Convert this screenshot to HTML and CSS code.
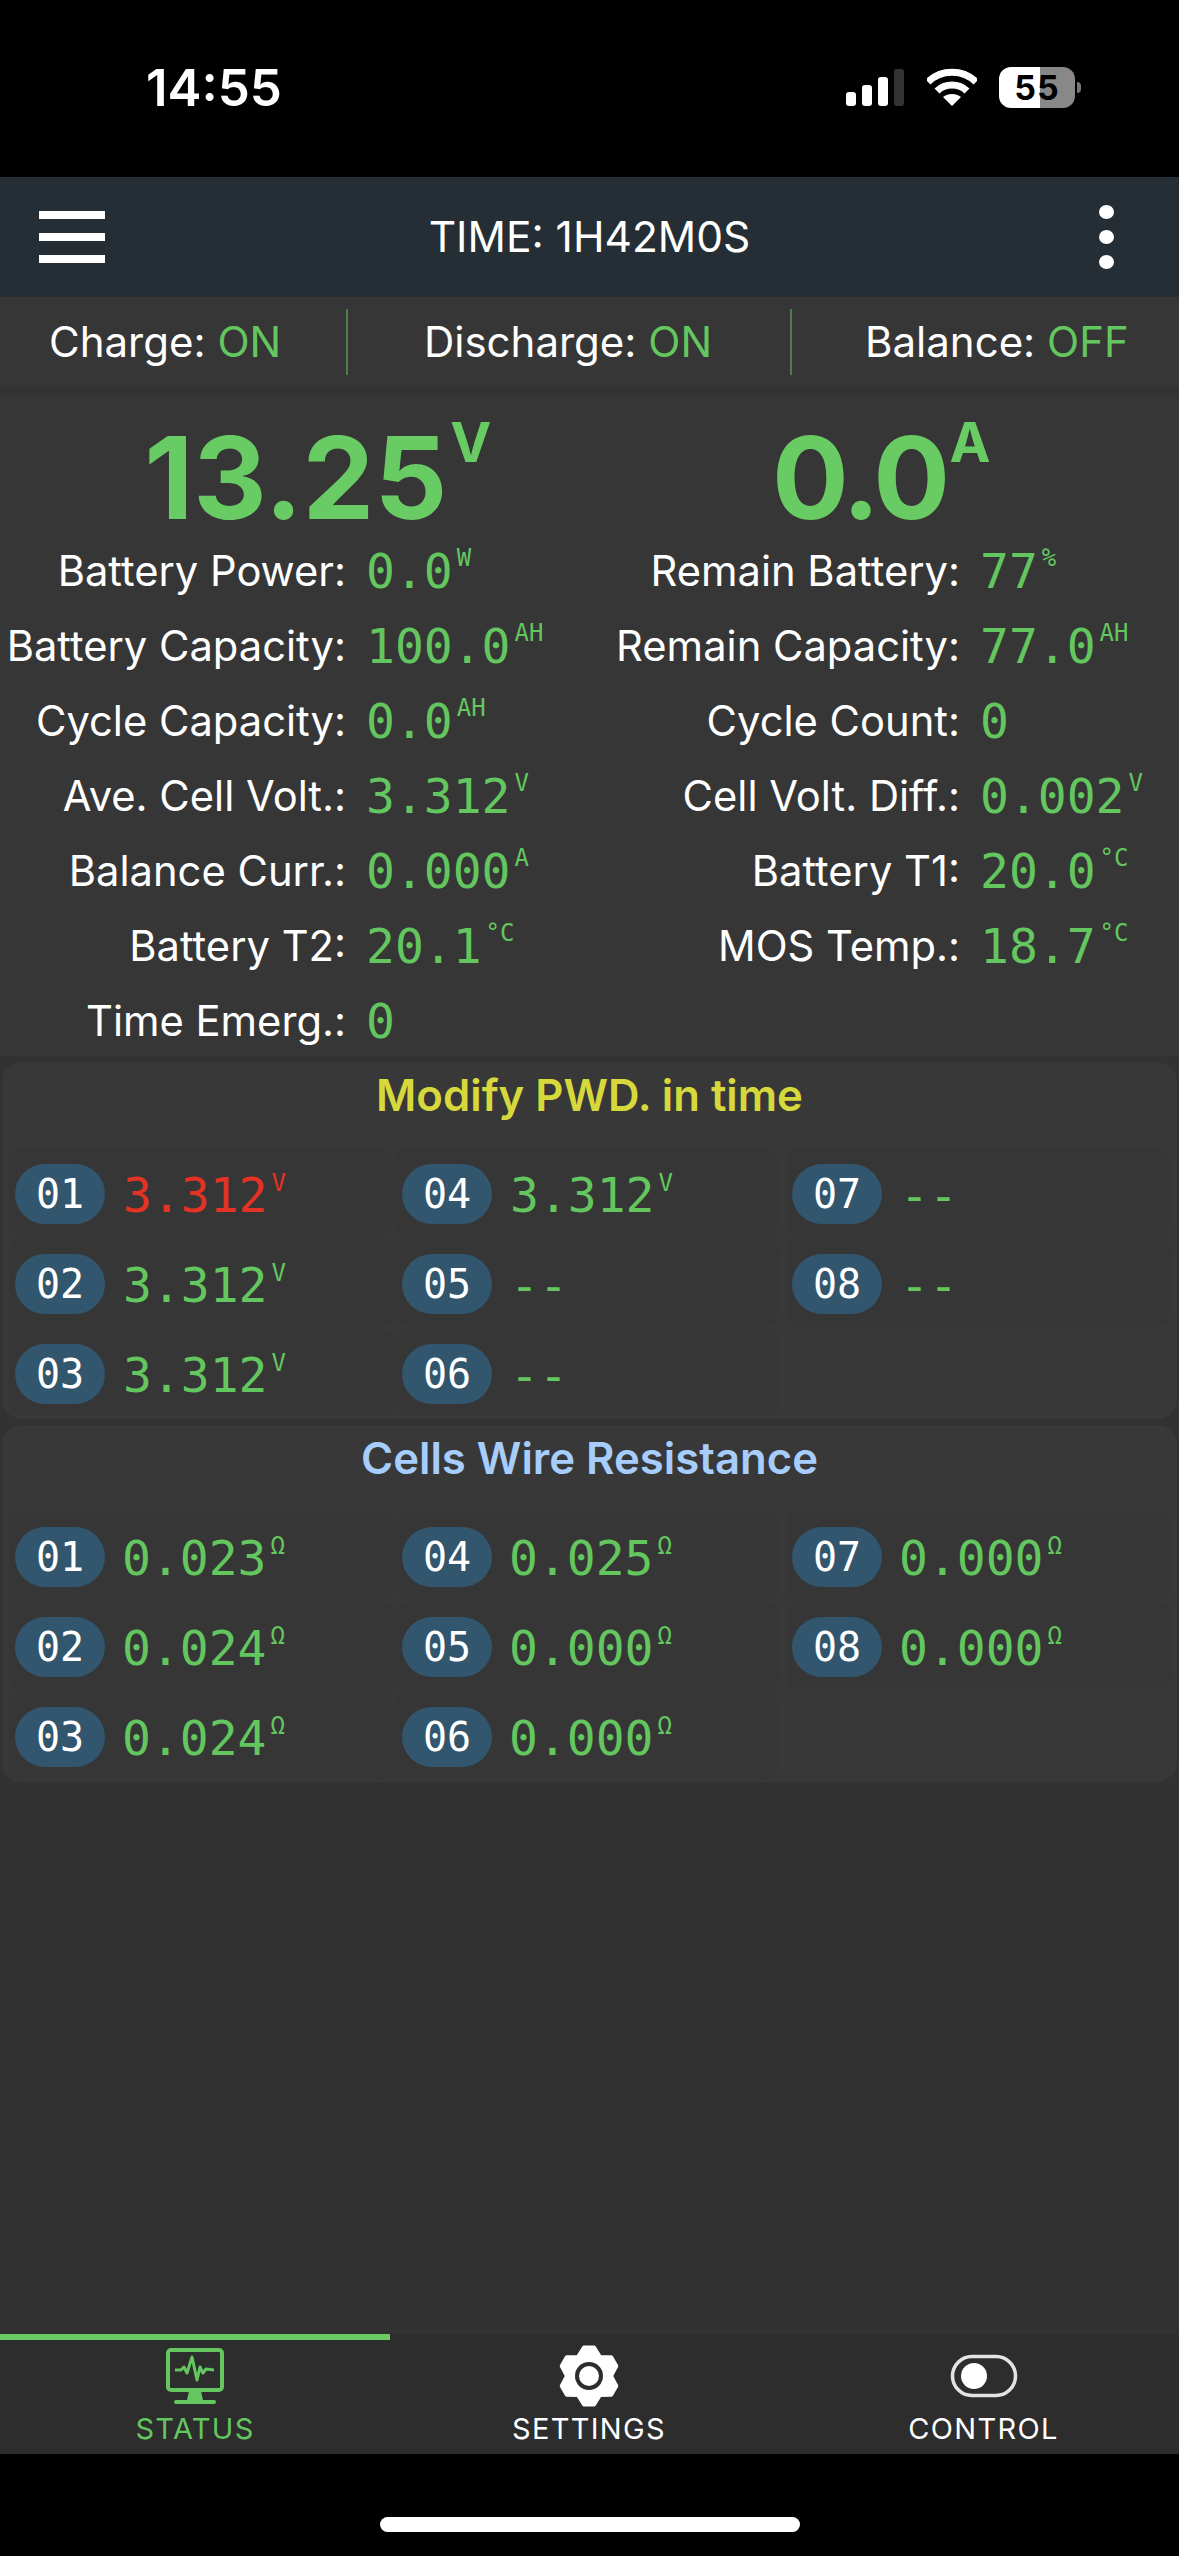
FILE: index.html
```html
<!DOCTYPE html>
<html lang="en">
<head>
<meta charset="utf-8">
<title>BMS Status</title>
<link rel="stylesheet" href="styles.css">
</head>
<body>
<div class="phone">
  <div class="statusbar">
    <span class="clock">14:55</span>
    <div class="sys">
      <svg class="signal" width="58" height="38" viewBox="0 0 58 38"><rect x="0" y="23" width="10" height="14" rx="3" fill="#fff"/><rect x="16" y="16" width="10" height="21" rx="3" fill="#fff"/><rect x="32" y="8" width="10" height="29" rx="3" fill="#fff"/><rect x="48" y="0" width="10" height="37" rx="3" fill="#333"/></svg>
      <svg class="wifi" width="50" height="38" viewBox="0 0 50 38"><path d="M1 14C14 1 36 1 49 14" fill="none" stroke="#fff" stroke-width="7"/><path d="M10 23C18 15 32 15 40 23" fill="none" stroke="#fff" stroke-width="7"/><path d="M25 38L16 29C21 25 29 25 34 29Z" fill="#fff"/></svg>
      <span class="battery">55</span>
    </div>
  </div>

  <header class="appbar">
    <div class="burger"><i></i><i></i><i></i></div>
    <div class="apptitle">TIME: 1H42M0S</div>
    <div class="dots"><i></i><i></i><i></i></div>
  </header>

  <div class="strip">
    <div class="sw sw1">Charge:&nbsp;<b>ON</b></div>
    <div class="sep"></div>
    <div class="sw sw2">Discharge:&nbsp;<b>ON</b></div>
    <div class="sep"></div>
    <div class="sw sw3">Balance:&nbsp;<b>OFF</b></div>
  </div>

  <main class="main">
    <section class="metrics">
      <div class="bigrow">
        <div class="big big1">13.25<sup>V</sup></div>
        <div class="big big2">0.0<sup>A</sup></div>
      </div>
      <div class="mgrid">
        <div class="lab">Battery Power:</div><div class="val">0.0<sup>W</sup></div>
        <div class="lab">Remain Battery:</div><div class="val">77<sup>%</sup></div>
        <div class="lab">Battery Capacity:</div><div class="val">100.0<sup>AH</sup></div>
        <div class="lab">Remain Capacity:</div><div class="val">77.0<sup>AH</sup></div>
        <div class="lab">Cycle Capacity:</div><div class="val">0.0<sup>AH</sup></div>
        <div class="lab">Cycle Count:</div><div class="val">0</div>
        <div class="lab">Ave. Cell Volt.:</div><div class="val">3.312<sup>V</sup></div>
        <div class="lab">Cell Volt. Diff.:</div><div class="val">0.002<sup>V</sup></div>
        <div class="lab">Balance Curr.:</div><div class="val">0.000<sup>A</sup></div>
        <div class="lab">Battery T1:</div><div class="val">20.0<sup>°C</sup></div>
        <div class="lab">Battery T2:</div><div class="val">20.1<sup>°C</sup></div>
        <div class="lab">MOS Temp.:</div><div class="val">18.7<sup>°C</sup></div>
        <div class="lab">Time Emerg.:</div><div class="val">0</div>
      </div>
    </section>

    <section class="panel">
      <h2 class="ptitle yellow">Modify PWD. in time</h2>
      <div class="cells">
        <div class="cell"><span class="pill">01</span><span class="val cv red">3.312<sup>V</sup></span></div>
        <div class="cell"><span class="pill">04</span><span class="val cv">3.312<sup>V</sup></span></div>
        <div class="cell"><span class="pill">07</span><span class="val cv">--</span></div>
        <div class="cell"><span class="pill">02</span><span class="val cv">3.312<sup>V</sup></span></div>
        <div class="cell"><span class="pill">05</span><span class="val cv">--</span></div>
        <div class="cell"><span class="pill">08</span><span class="val cv">--</span></div>
        <div class="cell"><span class="pill">03</span><span class="val cv">3.312<sup>V</sup></span></div>
        <div class="cell"><span class="pill">06</span><span class="val cv">--</span></div>
      </div>
    </section>

    <section class="panel panel2">
      <h2 class="ptitle blue">Cells Wire Resistance</h2>
      <div class="cells">
        <div class="cell"><span class="pill">01</span><span class="val cv">0.023<sup>Ω</sup></span></div>
        <div class="cell"><span class="pill">04</span><span class="val cv">0.025<sup>Ω</sup></span></div>
        <div class="cell"><span class="pill">07</span><span class="val cv">0.000<sup>Ω</sup></span></div>
        <div class="cell"><span class="pill">02</span><span class="val cv">0.024<sup>Ω</sup></span></div>
        <div class="cell"><span class="pill">05</span><span class="val cv">0.000<sup>Ω</sup></span></div>
        <div class="cell"><span class="pill">08</span><span class="val cv">0.000<sup>Ω</sup></span></div>
        <div class="cell"><span class="pill">03</span><span class="val cv">0.024<sup>Ω</sup></span></div>
        <div class="cell"><span class="pill">06</span><span class="val cv">0.000<sup>Ω</sup></span></div>
      </div>
    </section>
  </main>

  <nav class="tabs">
    <div class="tab active">
      <svg width="60" height="62" viewBox="0 0 60 62" fill="none" stroke="#63c65f"><rect x="3" y="5" width="54" height="40" rx="3" stroke-width="4"/><path d="M10 25H16L19 22L22 28L27 12L32 35L35 22L38 28L41 24L49 25" stroke-width="3" stroke-linejoin="round"/><path d="M24 46H36L38 55H22Z" fill="#63c65f" stroke="none"/><rect x="9" y="55" width="42" height="4" rx="2" fill="#63c65f" stroke="none"/></svg>
      <span>STATUS</span>
    </div>
    <div class="tab">
      <svg width="60" height="62" viewBox="0 0 60 62"><polygon points="24.96,2.44 35.04,2.44 41,11.95 52.2,12.36 57.25,21.08 52,31 57.25,40.92 52.2,49.64 41,50.05 35.04,59.56 24.96,59.56 19,50.05 7.8,49.64 2.75,40.92 8,31 2.75,21.08 7.8,12.36 19,11.95" fill="#fff" stroke="#fff" stroke-width="4" stroke-linejoin="round"/><circle cx="30" cy="31" r="14" fill="#2d2d2d"/><circle cx="30" cy="31" r="10" fill="#fff"/></svg>
      <span>SETTINGS</span>
    </div>
    <div class="tab">
      <svg width="68" height="62" viewBox="0 0 68 62"><rect x="2.5" y="11.5" width="63" height="39" rx="19.5" fill="none" stroke="#e4e4e4" stroke-width="3.5"/><circle cx="24" cy="31" r="13" fill="#fff"/></svg>
      <span>CONTROL</span>
    </div>
  </nav>

  <div class="homearea"><div class="homebar"></div></div>
</div>
</body>
</html>
```
FILE: styles.css
```css
* { box-sizing: border-box; }
html, body { margin: 0; padding: 0; background: #000; }
body { font-family: Inter, "Noto Sans", sans-serif; color: #fff; }
.phone { width: 1179px; height: 2556px; display: flex; flex-direction: column; overflow: hidden; }

.statusbar { height: 177px; background: #000; display: flex; justify-content: space-between; padding: 60px 104px 0 146px; }
.clock { font-size: 51px; font-weight: 600; line-height: 56px; height: 56px; }
.sys { display: flex; gap: 23px; height: 42px; margin-top: 7px; align-items: flex-start; }
.signal { margin-top: 2px; }
.wifi { margin-top: 1px; }
.battery { width: 76px; height: 41px; border-radius: 12px; background: linear-gradient(90deg, #fff 41px, #888 41px); color: #000; font-size: 34px; font-weight: 700; letter-spacing: 1px; line-height: 41px; text-align: center; position: relative; margin-left: -1px; }
.battery::after { content: ""; position: absolute; left: 78px; top: 15px; width: 4px; height: 11px; border-radius: 0 6px 6px 0; background: #777; }

.appbar { height: 120px; background: #252e35; display: grid; grid-template-columns: 1fr auto 1fr; align-items: center; padding: 0 65px; }
.burger { display: flex; flex-direction: column; gap: 14px; width: 66px; margin-left: -26px; }
.burger i { display: block; height: 8px; background: #fff; }
.apptitle { font-size: 42.5px; line-height: 120px; }
.dots { display: flex; flex-direction: column; gap: 11px; width: 15px; justify-self: end; }
.dots i { display: block; width: 15px; height: 14px; border-radius: 50%; background: #fff; }

.strip { height: 90px; background: #363636; display: grid; grid-template-columns: 346px 2px 442px 2px 1fr; padding-top: 12px; }
.sw { font-size: 42px; line-height: 66px; height: 66px; white-space: nowrap; }
.sw b { font-weight: 400; color: #63c65f; }
.sw1 { padding-left: 49px; }
.sw2 { text-align: center; padding-right: 2px; }
.sw3 { padding-left: 73px; }
.sep { height: 66px; background: #4c8048; }

.main { flex: 1; background: #323232; padding-top: 6px; }
.metrics { background: #363636; height: 663px; }
.bigrow { display: grid; grid-template-columns: 589.5px 1fr; height: 140px; }
.big { font-weight: 700; font-size: 114px; line-height: 110px; padding-top: 30px; color: #68cb63; text-align: center; white-space: nowrap; }
.big sup { font-size: 55px; line-height: 0; vertical-align: 57px; margin-left: 3px; letter-spacing: 0; }
.big1 { padding-left: 46px; }
.big2 { letter-spacing: -3.5px; padding-right: 6px; }
.mgrid { display: grid; grid-template-columns: 346px 243.5px 370.5px 1fr; grid-auto-rows: 75px; align-items: center; }
.lab { font-size: 41.7px; text-align: right; white-space: nowrap; }
.val { font-family: "DejaVu Sans Mono", monospace; font-size: 48px; color: #63c65f; padding-left: 20px; white-space: nowrap; }
.val sup { font-size: 24px; line-height: 0; vertical-align: 22px; margin-left: 4px; }

.panel { margin: 6px 2px 0; height: 357px; background: #383838; border-radius: 20px; padding: 0 7px; }
.ptitle { margin: 0; height: 87px; text-align: center; font-size: 43.7px; font-weight: 600; line-height: 68px; }
.yellow { color: #d6d83c; }
.blue { color: #a6cdfb; }
.cells { display: grid; grid-template-columns: 384px 382px 389px; column-gap: 3px; grid-auto-rows: 87px; row-gap: 3px; }
.cell { background: #363636; border-radius: 12px; display: flex; align-items: center; padding-left: 6px; }
.cell:nth-child(3n) { margin-left: 5px; }
.pill { width: 90px; height: 60px; margin-top: 3px; border-radius: 30px; background: #31566e; color: #fff; font-family: "DejaVu Sans Mono", monospace; font-size: 40px; line-height: 60px; text-align: center; }
.cv { padding: 4px 0 0 18px; }
.cv sup { vertical-align: 21px; }
.panel2 .cv { padding-left: 17px; }
.red { color: #e43224; }

.tabs { height: 120px; background: #2d2d2d; display: grid; grid-template-columns: 390px 398px 1fr; }
.tab { display: flex; flex-direction: column; align-items: center; padding-top: 11px; font-size: 29px; letter-spacing: 1.3px; line-height: 34px; }
.tab svg { display: block; height: 62px; margin-bottom: 5px; }
.tab.active { color: #63c65f; border-top: 6px solid #68cb63; padding-top: 5px; }
.homearea { height: 102px; background: #000; display: flex; justify-content: center; padding-top: 63px; }
.homebar { width: 420px; height: 15px; border-radius: 8px; background: #fff; }
```
